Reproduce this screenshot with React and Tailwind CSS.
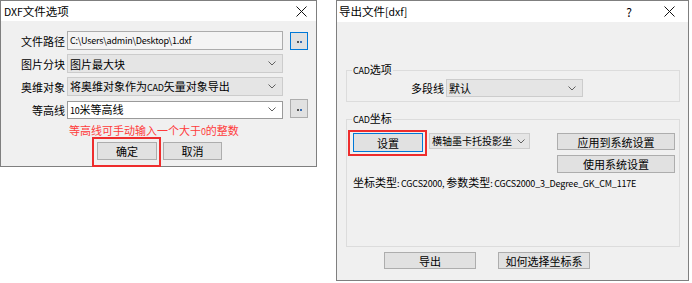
import React from "react"

const font = "font-['Microsoft_YaHei','Noto_Sans_CJK_SC',sans-serif]"

// latin runs render narrower than the CJK glyphs in this dialog font
const L = ({ children }) => <span className="text-[9px] tracking-[-0.2px]">{children}</span>

const CloseIcon = () => (
  <svg width="11" height="11" viewBox="0 0 11 11" className="block">
    <path d="M0.5 0.5 L10.5 10.5 M10.5 0.5 L0.5 10.5" stroke="#111" strokeWidth="1" fill="none" />
  </svg>
)

const Chevron = () => (
  <svg width="8" height="5" viewBox="0 0 8 5" className="block shrink-0">
    <polyline points="0.5,0.5 4,4 7.5,0.5" stroke="#606060" strokeWidth="1" fill="none" />
  </svg>
)

const Select = ({ children, className = "" }) => (
  <div className={`flex items-center justify-between bg-[#e5e5e5] border border-[#cccccc] pl-[2px] ${className}`}>
    <span className="whitespace-nowrap">{children}</span>
    <Chevron />
  </div>
)

const Button = ({ children, className = "", focused = false }) => (
  <div
    className={`flex items-center justify-center bg-[#e1e1e1] border ${
      focused ? "border-[#0078d7]" : "border-[#adadad]"
    } ${className}`}
  >
    {children}
  </div>
)

// red annotation frame drawn over a control
const Highlight = ({ className }) => (
  <div className={`absolute border-2 border-[#ee2d2d] pointer-events-none ${className}`} />
)

const DotsButton = ({ focused, className = "" }) => (
  <div
    className={`flex items-center justify-center bg-[#e1e1e1] border ${
      focused ? "border-[#0078d7]" : "border-[#adadad]"
    } w-[18px] ${className}`}
  >
    <span className="flex gap-[1px] mt-[3px]">
      <span className="w-[2px] h-[2px] bg-[#555]" />
      <span className="w-[2px] h-[2px] bg-[#3a6fb5]" />
    </span>
  </div>
)

const DxfOptions = () => (
  <div className="w-[317px] h-[167px] border border-[#7f7f7f] bg-[#f0f0f0] flex flex-col shrink-0">
    <div className="h-[20px] bg-white flex items-center justify-between pl-[3px] pr-[9px] text-[11.5px]">
      <span>
        <span className="text-[10.5px]">DXF</span>文件选项
      </span>
      <CloseIcon />
    </div>
    <div className="flex flex-col gap-[4px] pt-[10px]">
      <div className="flex items-center h-[19px]">
        <span className="w-[64px] text-right">文件路径</span>
        <div className="ml-[2px] w-[216px] h-[19px] bg-[#f4f4f4] border border-[#acacac] flex items-center pl-[2px]">
          <L>C:\Users\admin\Desktop\1.dxf</L>
        </div>
        <DotsButton focused className="ml-[7px] h-[18px]" />
      </div>
      <div className="flex items-center h-[19px]">
        <span className="w-[64px] text-right">图片分块</span>
        <Select className="ml-[2px] w-[216px] h-[19px] pr-[6px]">图片最大块</Select>
      </div>
      <div className="flex items-center h-[19px]">
        <span className="w-[64px] text-right">奥维对象</span>
        <Select className="ml-[2px] w-[216px] h-[19px] pr-[6px]">
          将奥维对象作为<L>CAD</L>矢量对象导出
        </Select>
      </div>
      <div className="flex items-center h-[19px]">
        <span className="w-[64px] text-right">等高线</span>
        <div className="ml-[2px] w-[216px] h-[18px] bg-white border border-[#9a9a9a] flex items-center justify-between pl-[2px] pr-[6px]">
          <span>
            <L>10</L>米等高线
          </span>
          <Chevron />
        </div>
        <DotsButton className="ml-[7px] h-[19px] -mt-[3px]" />
      </div>
    </div>
    <div className="pl-[68px] mt-[4px] h-[14px] leading-[14px] text-[#ff3b3b]">
      等高线可手动输入一个大于<L>0</L>的整数
    </div>
    <div className="flex gap-[6px] pl-[96px] mt-[5px]">
      <div className="relative">
        <Button className="w-[60px] h-[18px]">确定</Button>
        <Highlight className="-left-[5px] -right-[4px] -top-[5px] -bottom-[7px]" />
      </div>
      <Button className="w-[59px] h-[18px]">取消</Button>
    </div>
  </div>
)

const ExportDxf = () => (
  <div className="w-[353px] h-[281px] border border-[#7f7f7f] bg-[#f0f0f0] flex flex-col shrink-0">
    <div className="h-[21px] bg-white flex items-center pl-[2px] text-[11.5px]">
      <span>
        导出文件<span className="text-[10.5px]">[dxf]</span>
      </span>
      <span className="ml-auto mr-[32px] text-[12px]">?</span>
      <span className="mr-[13px]">
        <CloseIcon />
      </span>
    </div>
    <div className="flex flex-col px-[9px] pr-[8px]">
      <fieldset className="mt-[40px] border border-[#dcdcdc] pb-[4px]">
        <legend className="ml-[5px] px-[1px] leading-[14px]">
          <L>CAD</L>选项
        </legend>
        <div className="flex items-center mt-[1px]">
          <span className="w-[97px] text-right">多段线</span>
          <Select className="ml-[2px] w-[137px] h-[18px] pr-[6px]">默认</Select>
        </div>
      </fieldset>
      <fieldset className="mt-[9px] border border-[#dcdcdc] h-[136px]">
        <legend className="ml-[5px] px-[1px] leading-[14px]">
          <L>CAD</L>坐标
        </legend>
        <div className="flex items-start mt-[6px] pl-[6px] pr-[4px]">
          <div className="relative">
            <Button focused className="w-[70px] h-[19px]">设置</Button>
            <Highlight className="-left-[5px] -right-[4px] -top-[3px] -bottom-[4px]" />
          </div>
          <Select className="ml-[6px] w-[101px] h-[16px] pr-[4px] text-[10px]">横轴墨卡托投影坐</Select>
          <Button className="ml-auto w-[118px] h-[17px]">应用到系统设置</Button>
        </div>
        <div className="flex justify-end pr-[4px] mt-[3px]">
          <Button className="w-[118px] h-[18px]">使用系统设置</Button>
        </div>
        <div className="pl-[6px] mt-[2px] leading-[14px] whitespace-nowrap">
          坐标类型<L>: CGCS2000, </L>参数类型<L>: CGCS2000_3_Degree_GK_CM_117E</L>
        </div>
      </fieldset>
      <div className="flex gap-[22px] pl-[38px] mt-[5px]">
        <Button className="w-[92px] h-[17px]">导出</Button>
        <Button className="w-[92px] h-[17px]">如何选择坐标系</Button>
      </div>
    </div>
  </div>
)

export default function App() {
  return (
    <div className={`w-[692px] h-[283px] bg-white flex gap-[19px] overflow-hidden text-[11px] leading-[14px] text-black ${font}`}>
      <DxfOptions />
      <ExportDxf />
    </div>
  )
}
